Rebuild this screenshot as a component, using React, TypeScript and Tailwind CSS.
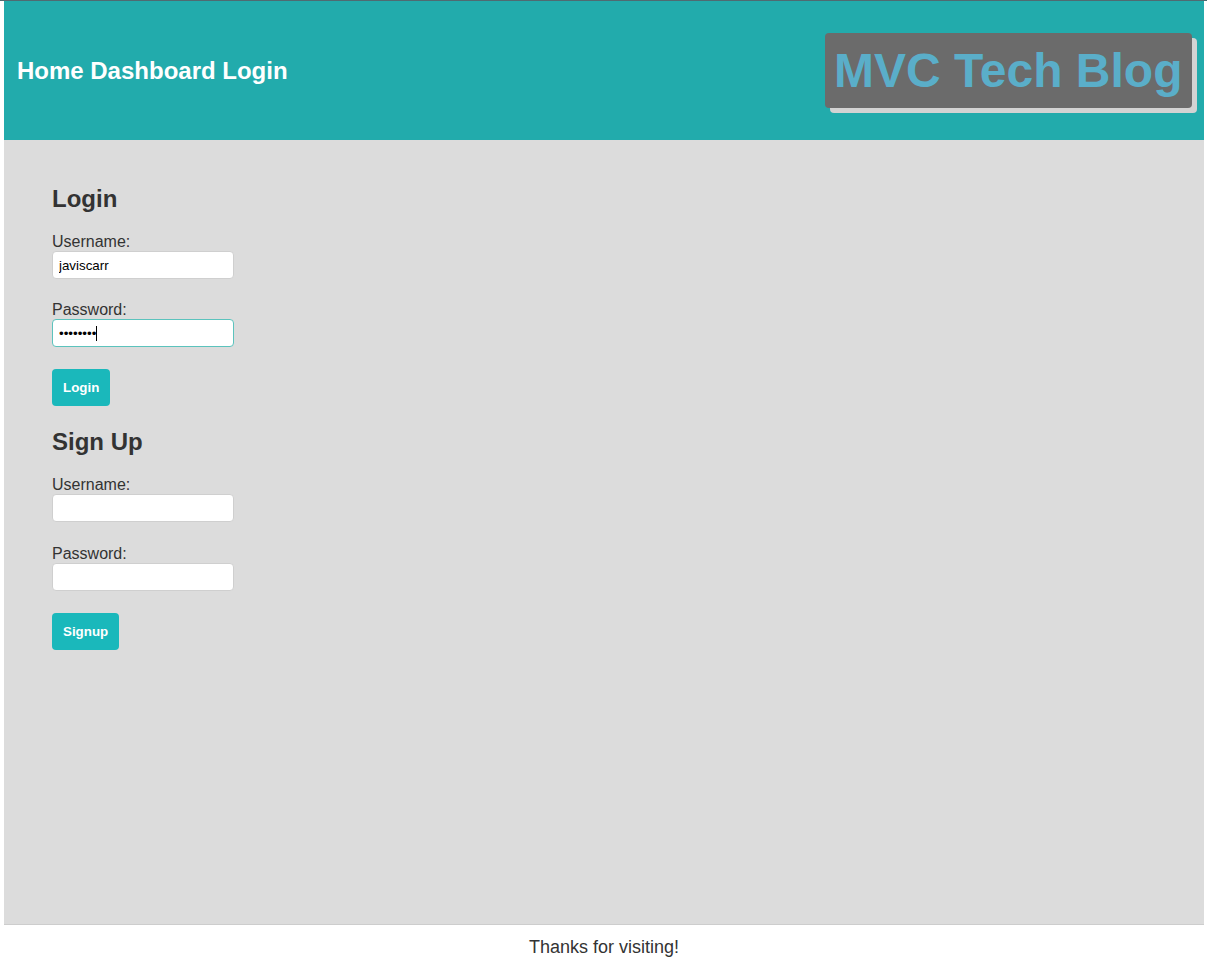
import React from "react";

const font = { fontFamily: '"Liberation Sans", Arial, sans-serif' };

function Field({ label, value, password, focused }: { label: string; value?: string; password?: boolean; focused?: boolean }) {
  return (
    <div>
      <label className="block text-[16px] leading-[19px] text-[#333]">{label}</label>
      <div className="relative w-[182px] h-[28px]">
        <input
          type={password ? "password" : "text"}
          readOnly
          value={value ?? ""}
          className={`block w-[182px] h-[28px] rounded-[4px] bg-white px-[6px] text-[13.33px] text-black outline-none border ${
            focused ? "border-[#5cc3bd]" : "border-[#cfcfcf]"
          }`}
          style={font}
        />
        {focused && <span className="absolute left-[44px] top-[7px] w-px h-[15px] bg-black" />}
      </div>
    </div>
  );
}

function Button({ children }: { children: React.ReactNode }) {
  return (
    <button className="h-[37px] px-[11px] rounded-[4px] bg-[#1ab8bb] text-white font-bold text-[13.33px]" style={font}>
      {children}
    </button>
  );
}

export default function App() {
  return (
    <div className="min-h-[966px] bg-white border-t border-[#4f6a71]" style={font}>
      <div className="ml-[4px] mr-[3px]">
        <header className="h-[139px] bg-[#22abac] flex items-center justify-between pl-[13px] pr-[12px]">
          <nav className="text-white font-bold text-[24px] flex gap-[6.6px]">
            <a>Home</a>
            <a>Dashboard</a>
            <a>Login</a>
          </nav>
          <h1 className="bg-[#6b6b6b] rounded-[4px] px-[9.5px] h-[75px] flex items-center text-[48px] font-bold text-[#5aaec9] shadow-[5px_5px_0_#d3d3d3]">
            MVC Tech Blog
          </h1>
        </header>
        <main className="h-[785px] bg-[#dcdcdc] border-b border-[#cdcdcd] pt-[45px] pl-[48px]">
          <section>
            <h2 className="text-[24px] leading-[28px] font-bold text-[#333]">Login</h2>
            <div className="mt-[19px]">
              <Field label="Username:" value="javiscarr" />
            </div>
            <div className="mt-[21px]">
              <Field label="Password:" value="password" password focused />
            </div>
            <div className="mt-[22px]">
              <Button>Login</Button>
            </div>
          </section>
          <section className="mt-[22px]">
            <h2 className="text-[24px] leading-[28px] font-bold text-[#333]">Sign Up</h2>
            <div className="mt-[19px]">
              <Field label="Username:" />
            </div>
            <div className="mt-[22px]">
              <Field label="Password:" password />
            </div>
            <div className="mt-[22px]">
              <Button>Signup</Button>
            </div>
          </section>
        </main>
        <footer className="h-[41px] pt-[4px] flex items-center justify-center text-[18px] text-[#333]">
          Thanks for visiting!
        </footer>
      </div>
    </div>
  );
}
